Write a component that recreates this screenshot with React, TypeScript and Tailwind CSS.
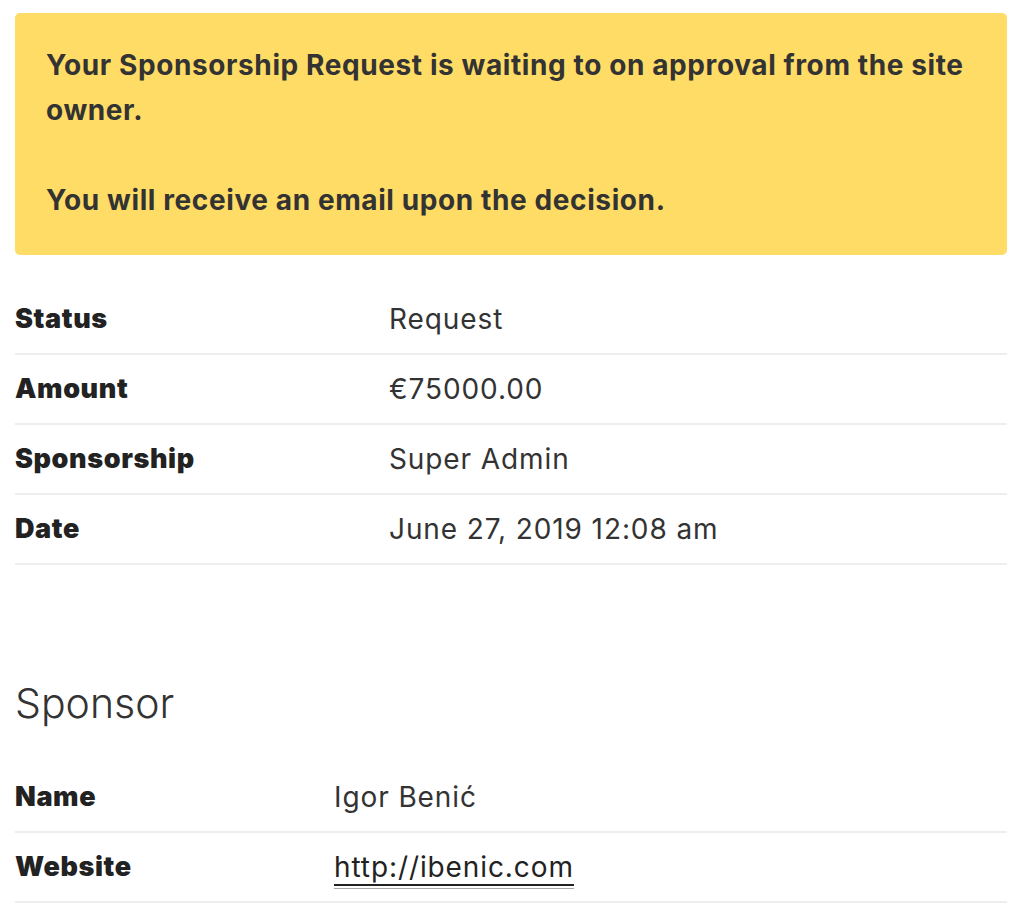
import React from "react";

const font = { fontFamily: "Inter, 'Noto Sans', sans-serif" };

type Row = { label: string; value: React.ReactNode };

function DetailTable({ rows, labelWidth }: { rows: Row[]; labelWidth: string }) {
  return (
    <div className="flex flex-col">
      {rows.map((r) => (
        <div key={r.label} className="flex h-[70px] items-center border-b-2 border-[#eeeeee]">
          <div className={`${labelWidth} shrink-0 text-[27px] leading-[36px] font-black tracking-[0.6px] text-[#222]`}>
            {r.label}
          </div>
          <div className="text-[28px] leading-[36px] font-normal tracking-[0.9px] text-[#333]">{r.value}</div>
        </div>
      ))}
    </div>
  );
}

export default function App() {
  const details: Row[] = [
    { label: "Status", value: "Request" },
    { label: "Amount", value: "€75000.00" },
    { label: "Sponsorship", value: "Super Admin" },
    { label: "Date", value: "June 27, 2019 12:08 am" },
  ];

  const sponsor: Row[] = [
    { label: "Name", value: "Igor Benić" },
    {
      label: "Website",
      value: (
        <a
          href="#"
          className="border-b-2 border-[#222] text-[#222] shadow-[0_2px_0_#fff,0_3px_0_#aaa]"
        >
          http://ibenic.com
        </a>
      ),
    },
  ];

  return (
    <div className="min-h-[910px] bg-white pl-[15px] pr-[17px] pt-[13px]" style={font}>
      {/* approval notice */}
      <div className="rounded-[5px] bg-[#ffdc65] px-[31px] pt-[30px] pb-[32px] text-[28px] font-bold leading-[45px] tracking-[0.6px] text-[#333]">
        <p>Your Sponsorship Request is waiting to on approval from the site owner.</p>
        <p className="mt-[45px]">You will receive an email upon the decision.</p>
      </div>

      <div className="mt-[30px]">
        <DetailTable rows={details} labelWidth="w-[374px]" />
      </div>

      <h2 className="mt-[114px] text-[41px] font-light leading-[48px] text-[#333]">Sponsor</h2>

      <div className="mt-[36px]">
        <DetailTable rows={sponsor} labelWidth="w-[319px]" />
      </div>
    </div>
  );
}
